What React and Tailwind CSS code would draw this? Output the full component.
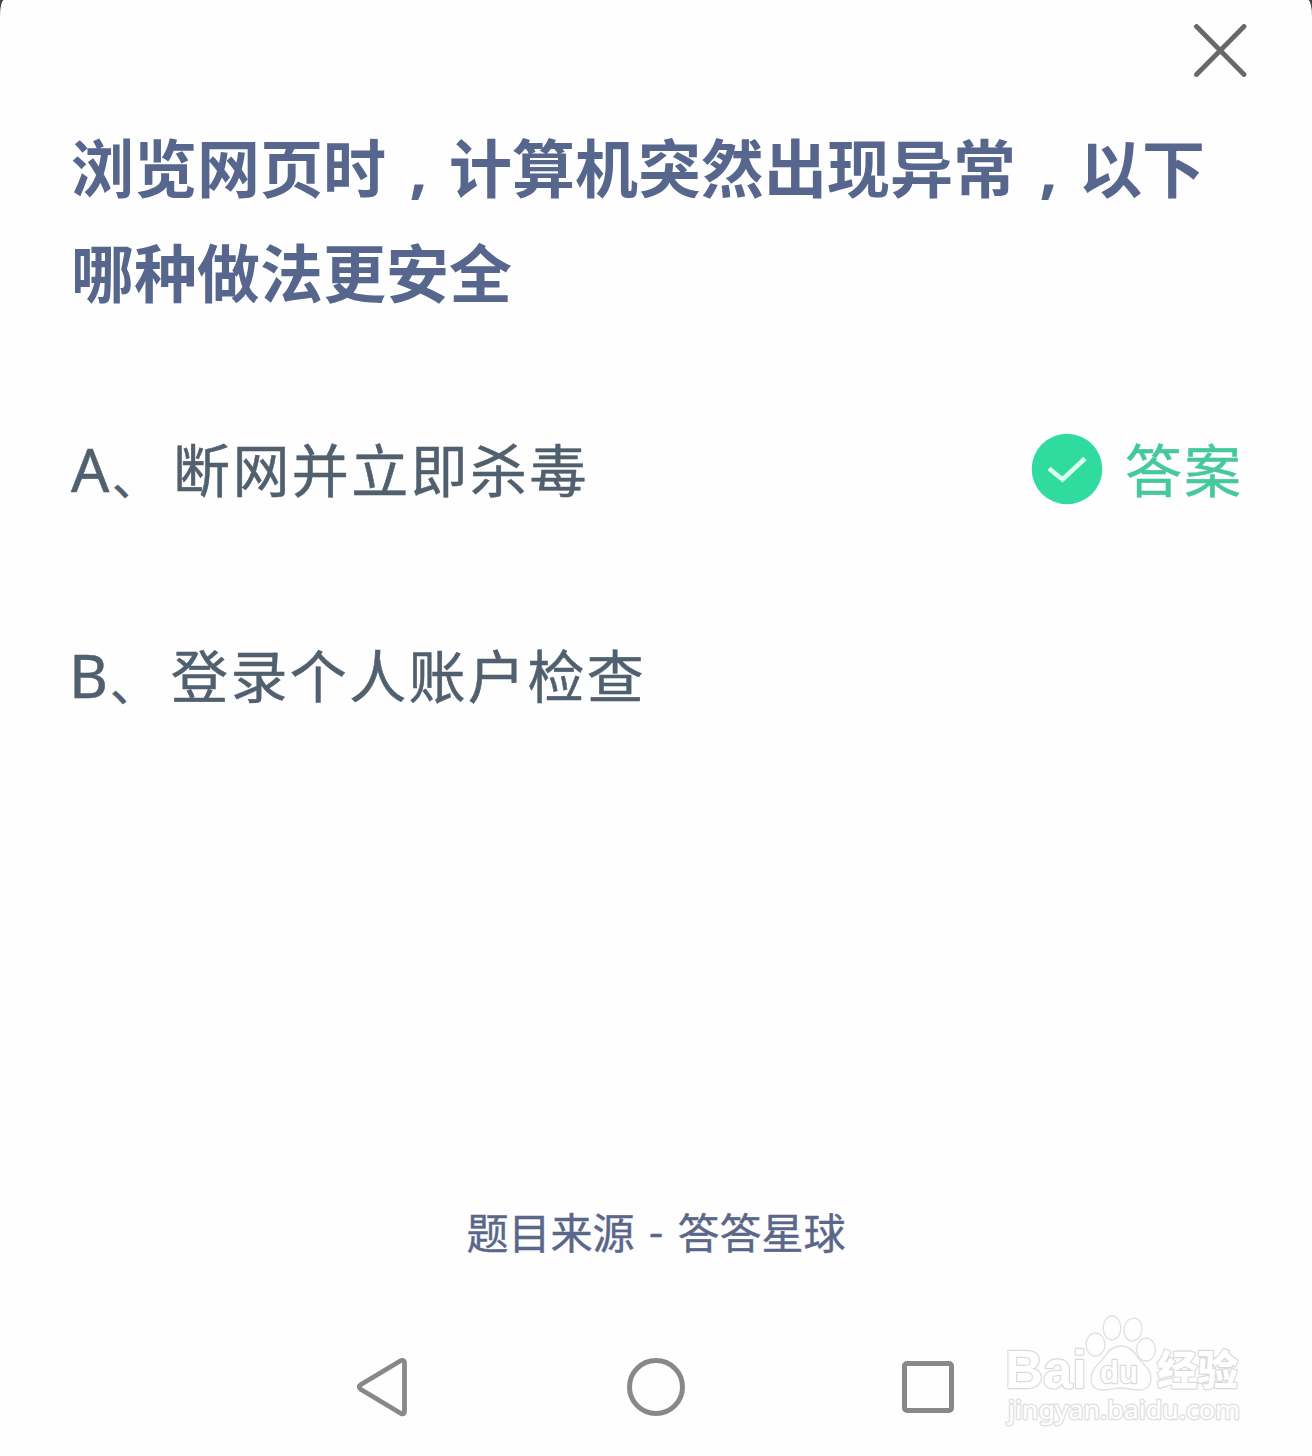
import React from 'react';

const options = [
  { key: 'A', text: '断网并立即杀毒', correct: true },
  { key: 'B', text: '登录个人账户检查', correct: false },
];

function Comma() {
  return <span className="inline-block w-[63px] pl-[2px] text-center">,</span>;
}

function CheckBadge() {
  return (
    <svg className="size-[72px] shrink-0" viewBox="0 0 72 72" fill="none">
      <circle cx="36" cy="36" r="35.3" fill="#2fdb9f" />
      <path d="M18 35.500 L31.500 46.500 L54 25.500" stroke="#dcfff0" strokeWidth="4.600" />
    </svg>
  );
}

function OptionRow({ option }) {
  return (
    <div className="flex h-[206px] items-center justify-between text-[57px] leading-[90px] text-[#51606f] [-webkit-text-stroke:0.5px]">
      <p className="flex items-baseline whitespace-nowrap">
        <span className={option.key === 'A' ? 'w-[41px] text-[60px] leading-[90px]' : '-ml-[2px] w-[41px] text-[60px] leading-[90px]'}>
          {option.key}
        </span>
        <span className="mr-[14px] translate-y-[3px] text-[47px] leading-[70px]">、</span>
        <span className="tracking-[2.4px]">{option.text}</span>
      </p>
      {option.correct && (
        <div className="flex items-center gap-[22px] text-[#45c99a]">
          <CheckBadge />
          <span className="-mr-[2px] pt-[2px] tracking-[2px]">答案</span>
        </div>
      )}
    </div>
  );
}

function Watermark() {
  return (
    <svg
      className="absolute left-[990px] top-[1300px] h-[140px] w-[270px]"
      viewBox="0 0 270 140"
      fill="#fff"
      stroke="#dadada"
      strokeWidth="1.300"
      strokeLinejoin="round"
      paintOrder="stroke"
    >
      <text className="font-['Liberation_Sans',sans-serif] font-bold" x="15" y="88" fontSize="53" textLength="82" lengthAdjust="spacingAndGlyphs" strokeWidth="2.400">Bai</text>
      <text className="font-['Noto_Sans_CJK_SC',sans-serif] font-black" x="167" y="85" fontSize="41" textLength="81" lengthAdjust="spacingAndGlyphs" strokeWidth="2.400">经验</text>
      <g fill="none" stroke="#e0e0e0">
        <ellipse cx="105.500" cy="44.500" rx="9.500" ry="11.500" />
        <ellipse cx="122" cy="28" rx="8.800" ry="12" />
        <ellipse cx="143" cy="29.500" rx="9" ry="11.500" transform="rotate(10 143 29.500)" />
        <ellipse cx="156" cy="49.500" rx="9.500" ry="11.500" />
        <path d="M131 46 C140 46 145 52 149 59 C154 65 161 69 161 79 C161 86 156 90 149 90 C142 90 138 88 131 88 C124 88 119 90 113 90 C105 90 101 86 101 79 C101 69 108 65 113 59 C117 52 122 46 131 46 Z" />
      </g>
      <text className="font-['Liberation_Sans',sans-serif] font-bold" x="110" y="83" fontSize="31" textLength="38" lengthAdjust="spacingAndGlyphs" strokeWidth="2.400">du</text>
      <text className="font-['Noto_Sans',sans-serif]" x="18" y="119" fontSize="25" textLength="232" lengthAdjust="spacingAndGlyphs" stroke="#e2e2e2" strokeWidth="2.800">jingyan.baidu.com</text>
    </svg>
  );
}

function NavBar() {
  return (
    <nav className="flex h-[138px] items-center pl-[354px]">
      <svg className="h-[60px] w-[56px]" viewBox="0 0 56 60" fill="none" stroke="#888" strokeWidth="4.800">
        <path d="M47 3.500 Q50.500 2.500 50.500 6 V54 Q50.500 58 47 56.500 L7 32.500 Q3.500 30 7 27.500 Z" strokeLinejoin="round" />
      </svg>
      <span className="ml-[217px] size-[58px] rounded-full border-5 border-[#888]" />
      <span className="ml-[217px] size-[52px] rounded-[5px] border-5 border-[#888]" />
    </nav>
  );
}

export default function App() {
  return (
    <div className="h-[1456px] w-[1312px] overflow-hidden bg-[#444]">
      <main className="relative flex h-full flex-col bg-[#fefefe] font-['Noto_Sans','Noto_Sans_CJK_SC',sans-serif] [border-radius:4px_4px_0_0/16px_16px_0_0]">
        <header className="flex h-[115px] justify-end pr-[65px] pt-6">
          <svg className="size-[53px]" viewBox="0 0 53 53" stroke="#686868" strokeWidth="4.800" strokeLinecap="round">
            <path d="M2.500 2.500 L50 50.500 M50 2.500 L2.500 50.500" />
          </svg>
        </header>
        <section className="flex h-[1027px] flex-col px-[71px]">
          <h1 className="whitespace-nowrap text-[63px] font-bold leading-[105px] text-[#56668c]">
            浏览网页时<Comma />计算机突然出现异常<Comma />以下
            <br />
            哪种做法更安全
          </h1>
          <div className="mt-[41px]">
            {options.map((option) => (
              <OptionRow key={option.key} option={option} />
            ))}
          </div>
        </section>
        <footer className="flex h-[176px] justify-center pt-[61px] text-[42px] leading-[60px] text-[#5a678a] [-webkit-text-stroke:0.4px]">
          <p className="flex whitespace-pre">
            <span>题目来源</span>
            <span className="-mt-[4px] w-[43px] text-center font-['Noto_Sans_CJK_SC',sans-serif]"> - </span>
            <span>答答星球</span>
          </p>
        </footer>
        <NavBar />
        <Watermark />
      </main>
    </div>
  );
}
